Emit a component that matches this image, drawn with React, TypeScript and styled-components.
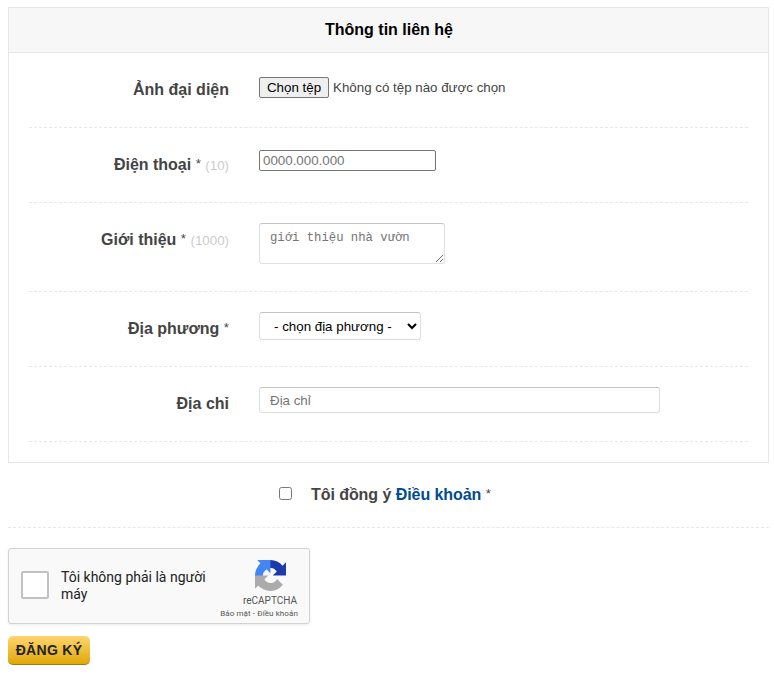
import React from 'react';
import styled, { createGlobalStyle } from 'styled-components';

const GlobalStyle = createGlobalStyle`
  * { box-sizing: border-box; }
  body {
    margin: 0;
    background: #fff;
    color: #444;
    font: 13.333px "Liberation Sans", Arial, sans-serif;
  }
`;

const Page = styled.form`
  width: 769px;
  padding: 7px 0 0 8px;
`;

const Panel = styled.section`
  border: 1px solid #e7e7e7;
  height: 456px;
`;

const PanelTitle = styled.h2`
  margin: 0;
  height: 45px;
  padding-left: 1px;
  line-height: 43px;
  border-bottom: 1px solid #e7e7e7;
  background: #f7f7f7;
  color: #000;
  font-size: 16px;
  font-weight: bold;
  text-align: center;
`;

const Rows = styled.div`
  padding: 0 20px;
`;

const Row = styled.div<{ $height?: number; $offset?: number }>`
  display: grid;
  grid-template-columns: 200px 1fr;
  column-gap: 30px;
  align-items: start;
  height: ${(p) => p.$height ?? 75}px;
  padding-top: 20px;
  border-bottom: 1px dashed #e7e7e7;
  & > :last-child { margin-top: ${(p) => p.$offset ?? 0}px; }
`;

const Label = styled.label`
  font-size: 16px;
  font-weight: bold;
  line-height: 34px;
  text-align: right;
  white-space: nowrap;
`;

const Star = styled.span`
  font-size: 13.333px;
  font-weight: normal;
  vertical-align: 2px;
  line-height: 1;
`;

const Limit = styled.span`
  color: #ccc;
  font-size: 13.333px;
  font-weight: normal;
`;

const FilePicker = styled.div`
  display: flex;
  align-items: center;
  gap: 4px;
`;

const FileButton = styled.button`
  width: 70px;
  height: 21px;
  padding: 0;
  border: 1px solid #767676;
  border-radius: 2px;
  background: #efefef;
  color: #000;
  font: 13.333px "Liberation Sans", Arial, sans-serif;
`;

const PhoneInput = styled.input`
  width: 177px;
  height: 21px;
  padding: 0 3px;
  border: 1px solid #767676;
  border-radius: 2px;
  font: 13.333px "Liberation Sans", Arial, sans-serif;
  &::placeholder { color: #757575; }
`;

const AddressInput = styled.input`
  width: 401px;
  height: 26px;
  padding: 0 10px;
  border: 1px solid #e0e0e0;
  border-top-color: #c4c4c4;
  border-radius: 3px;
  font: 13.333px "Liberation Sans", Arial, sans-serif;
  &::placeholder { color: #757575; }
`;

const Intro = styled.textarea`
  display: block;
  width: 186px;
  height: 41px;
  padding: 6px 10px 4px;
  border: 1px solid #e0e0e0;
  border-top-color: #c4c4c4;
  border-radius: 3px;
  font: 12.25px/16px "Liberation Mono", monospace;
  overflow: hidden;
  &::placeholder { color: #757575; }
`;

const Region = styled.select`
  width: 162px;
  height: 28px;
  padding: 0 1px 0 10px;
  border: 1px solid #e0e0e0;
  border-top-color: #c4c4c4;
  border-radius: 3px;
  background: #fff;
  color: #000;
  font: 13.333px "Liberation Sans", Arial, sans-serif;
`;

const Agreement = styled.div`
  display: flex;
  align-items: center;
  height: 65px;
  padding: 0 0 0 271px;
  border-bottom: 1px dashed #e7e7e7;
  font-size: 16px;
  font-weight: bold;
  letter-spacing: -0.06px;
  white-space: pre;
`;

const AgreeBox = styled.input`
  width: 13px;
  height: 13px;
  margin: 0 19px 4px 0;
`;

const TermsLink = styled.a`
  color: #004b91;
`;

const Captcha = styled.div`
  display: flex;
  width: 302px;
  height: 76px;
  margin-top: 20px;
  border: 1px solid #d3d3d3;
  border-radius: 3px;
  background: #f9f9f9;
  box-shadow: 0 1px 3px rgba(0, 0, 0, 0.08);
  color: #222;
  font-family: Roboto, sans-serif;
`;

const CaptchaBox = styled.div`
  width: 28px;
  height: 28px;
  margin: 22px 12px 0;
  border: 2px solid #c1c1c1;
  border-radius: 2px;
  background: #fff;
`;

const CaptchaText = styled.div`
  width: 152px;
  padding-top: 20px;
  font-size: 14px;
  line-height: 17px;
`;

const CaptchaBrand = styled.div`
  display: flex;
  flex: 1;
  flex-direction: column;
  align-items: flex-end;
  padding: 11px 11px 0 0;
  color: #555;
  white-space: nowrap;
`;

const BrandLogo = styled.svg`
  width: 31px;
  height: 31px;
  margin-right: 12px;
`;

const BrandName = styled.div`
  margin: 4px 1px 0 0;
  font-size: 10px;
  line-height: 12px;
`;

const BrandLinks = styled.div`
  margin-top: 2px;
  font-size: 8px;
  line-height: 10px;
  letter-spacing: 0.1px;
`;

const Submit = styled.button`
  display: block;
  width: 82px;
  height: 29px;
  margin-top: 12px;
  padding: 0;
  border: 0;
  border-bottom: 1px solid #a67c12;
  border-radius: 5px;
  background: linear-gradient(#fed66e, #e1a70a);
  color: #222;
  font: bold 14px "Liberation Sans", Arial, sans-serif;
  letter-spacing: 0.3px;
`;

export default function App() {
  return (
    <>
      <GlobalStyle />
      <Page onSubmit={(e) => e.preventDefault()}>
        <Panel>
          <PanelTitle>Thông tin liên hệ</PanelTitle>
          <Rows>
            <Row $offset={4}>
              <Label>Ảnh đại diện</Label>
              <FilePicker>
                <FileButton type="button">Chọn tệp</FileButton>
                <span>Không có tệp nào được chọn</span>
              </FilePicker>
            </Row>
            <Row $offset={2}>
              <Label>
                Điện thoại <Star>*</Star> <Limit>(10)</Limit>
              </Label>
              <PhoneInput placeholder="0000.000.000" />
            </Row>
            <Row $height={89}>
              <Label>
                Giới thiệu <Star>*</Star> <Limit>(1000)</Limit>
              </Label>
              <Intro placeholder="giới thiệu nhà vườn" spellCheck={false} />
            </Row>
            <Row>
              <Label>
                Địa phương <Star>*</Star>
              </Label>
              <Region>
                <option>- chọn địa phương -</option>
              </Region>
            </Row>
            <Row>
              <Label>Địa chỉ</Label>
              <AddressInput placeholder="Địa chỉ" />
            </Row>
          </Rows>
        </Panel>
        <Agreement>
          <AgreeBox type="checkbox" id="agree" />
          <label htmlFor="agree">
            Tôi đồng ý <TermsLink>Điều khoản</TermsLink> <Star>*</Star>
          </label>
        </Agreement>
        <Captcha>
          <CaptchaBox />
          <CaptchaText>Tôi không phải là người máy</CaptchaText>
          <CaptchaBrand>
            <BrandLogo viewBox="0 0 64 64">
              <path fill="#1c3aa9" d="M64 31.955l-.033-1.37V4.687l-7.16 7.16C50.948 4.674 42.033.093 32.05.093c-10.4 0-19.622 4.96-25.458 12.64l11.736 11.86a15.55 15.55 0 0 1 4.754-5.334c2.05-1.6 4.952-2.906 8.968-2.906.485 0 .86.057 1.135.163 4.976.393 9.288 3.14 11.828 7.124l-8.307 8.307L64 31.953" />
              <path fill="#4285f4" d="M31.862.094l-1.37.033H4.594l7.16 7.16C4.58 13.147 0 22.06 0 32.046c0 10.4 4.96 19.622 12.64 25.458L24.5 45.768a15.55 15.55 0 0 1-5.334-4.754c-1.6-2.05-2.906-4.952-2.906-8.968 0-.485.057-.86.163-1.135.393-4.976 3.14-9.288 7.124-11.828l8.307 8.307L31.86.095" />
              <path fill="#ababab" d="M.001 32.045l.033 1.37v25.898l7.16-7.16c5.86 7.173 14.774 11.754 24.76 11.754 10.4 0 19.622-4.96 25.458-12.64l-11.736-11.86a15.55 15.55 0 0 1-4.754 5.334c-2.05 1.6-4.952 2.906-8.968 2.906-.485 0-.86-.057-1.135-.163-4.976-.393-9.288-3.14-11.828-7.124l8.307-8.307c-10.522.04-22.4.066-27.295-.005" />
            </BrandLogo>
            <BrandName>reCAPTCHA</BrandName>
            <BrandLinks>Bảo mật - Điều khoản</BrandLinks>
          </CaptchaBrand>
        </Captcha>
        <Submit type="submit">ĐĂNG KÝ</Submit>
      </Page>
    </>
  );
}
